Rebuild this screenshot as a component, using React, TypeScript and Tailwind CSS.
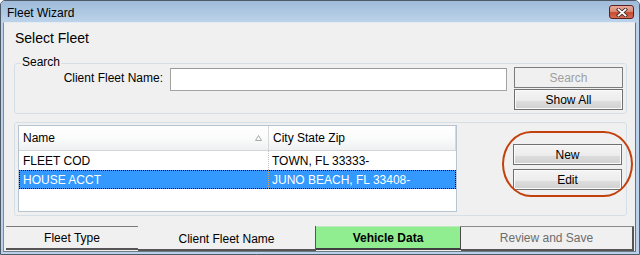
import React from "react";

function Btn({ children, disabled }: { children: React.ReactNode; disabled?: boolean }) {
  return disabled ? (
    <div className="h-[21px] w-[109px] border border-[#7c7c7c] bg-[#f0f0f0] text-[#a0a0a0] flex items-center justify-center text-[12px] leading-[14px]">
      {children}
    </div>
  ) : (
    <div className="h-[21px] w-[109px] border border-[#707070] bg-[linear-gradient(#f4f4f4_0%,#ececec_55%,#dcdcdc_60%,#d0d0d0_100%)] shadow-[inset_0_0_0_1px_#fafafa] text-black flex items-center justify-center text-[12px] leading-[14px]">
      {children}
    </div>
  );
}

export default function App() {
  return (
    <div className="w-[640px] h-[255px] font-['Liberation_Sans',Arial,sans-serif] text-[12px] leading-[14px] text-black">
      <div className="w-[640px] h-[255px] flex flex-col bg-[#b9d1ea] border border-[#4d5a68] rounded-t-[5px] overflow-hidden">
        {/* Title bar */}
        <div className="h-[21px] flex items-start justify-between pl-[6px] pr-[5px] bg-[linear-gradient(#9fbbd9,#bcd3ea)]">
          <div className="mt-[5px] text-[12px] leading-[14px] text-black">Fleet Wizard</div>
          <div className="mt-[4px] h-[14px] w-[25px] rounded-[3px] border border-[#5b2121] bg-[linear-gradient(#e9ab9b_0%,#dc8a76_45%,#c64a31_55%,#d66c52_100%)] flex items-center justify-center">
            <svg width="12" height="9" viewBox="0 0 12 9">
              <path d="M2.5 1.5 L9.5 7.5 M9.5 1.5 L2.5 7.5" stroke="#3a2424" strokeWidth="3.4" strokeLinecap="square" />
              <path d="M2.5 1.5 L9.5 7.5 M9.5 1.5 L2.5 7.5" stroke="#ffffff" strokeWidth="1.8" strokeLinecap="square" />
            </svg>
          </div>
        </div>
        {/* Content */}
        <div className="ml-[2px] mr-[3px] mb-[2px] flex-1 flex flex-col bg-[#f0f0f0] border-l border-r border-b border-t border-l-[#7d8c9c] border-r-[#6f6f6f] border-b-[#6f7a86] border-t-[#e3ebf3]">
          <div className="pl-[11px] pt-[7px] text-[14px] leading-[16px]">Select Fleet</div>

          {/* Search group */}
          <div className="relative ml-[10px] mt-[17px] w-[613px] h-[51px] border border-[#d5dfe5] rounded-[3px]">
            <span className="absolute left-[6px] top-[-9px] px-[1px] bg-[#f0f0f0]">Search</span>
            <div className="flex items-start pt-[3px]">
              <div className="w-[148px] text-right mt-[4px]">Client Fleet Name:</div>
              <div className="ml-[7px] mt-[1px] w-[337px] h-[23px] bg-white border border-[#a3a3a3] border-t-[#9a9a9a]" />
              <div className="ml-[7px] flex flex-col gap-[1px]">
                <Btn disabled>Search</Btn>
                <Btn>Show All</Btn>
              </div>
            </div>
          </div>

          {/* List group */}
          <div className="relative ml-[10px] mt-[8px] w-[613px] h-[94px] border border-[#d5dfe5] rounded-[3px]">
            <div className="flex items-start pl-[3px] pt-[2px]">
              <div className="w-[439px] h-[87px] bg-white border border-[#b7c4d1] flex flex-col">
                <div className="h-[25px] flex bg-[linear-gradient(#ffffff_0%,#fbfbfb_50%,#eef0f2_100%)] border-b border-[#d5d5d5]">
                  <div className="w-[250px] flex items-center justify-between pl-[4px] pr-[6px] border-r border-[#d8d8d8]">
                    <span>Name</span>
                    <svg width="7" height="6" viewBox="0 0 7 6">
                      <path d="M0.5 5.5 L3.5 0.5 L6.5 5.5 Z" fill="none" stroke="#a8a8a8" strokeWidth="1" />
                    </svg>
                  </div>
                  <div className="flex-1 flex items-center pl-[4px] border-r border-[#d8d8d8]">City State Zip</div>
                </div>
                <div className="h-[19px] flex">
                  <div className="w-[250px] flex items-center pl-[4px] border-r border-dotted border-[#bdbdbd]">FLEET COD</div>
                  <div className="flex-1 flex items-center pl-[3px]">TOWN, FL 33333-</div>
                </div>
                <div className="h-[19px] flex bg-[#3399ff] text-white outline-1 outline-dotted outline-offset-[-1px] outline-black">
                  <div className="w-[250px] flex items-center pl-[4px] border-r border-dotted border-[#d9a060]">HOUSE ACCT</div>
                  <div className="flex-1 flex items-center pl-[3px]">JUNO BEACH, FL 33408-</div>
                </div>
              </div>
              <div className="ml-[56px] mt-[19px] flex flex-col gap-[4px]">
                <Btn>New</Btn>
                <Btn>Edit</Btn>
              </div>
            </div>
            <div className="absolute left-[487px] top-[8px] w-[131px] h-[66px] border-2 border-[#c2410c] rounded-[30px/34px]" />
          </div>

          {/* Tabs */}
          <div className="mt-[10px] pl-[2px] flex items-start">
            <div className="w-[132px] h-[24px] bg-[#f0f0f0] border-t border-t-[#7a7a7a] border-b-2 border-b-[#555555] flex items-center justify-center">
              Fleet Type
            </div>
            <div className="w-[178px] h-[25px] bg-[#f0f0f0] border-r border-b-2 border-[#555555] flex items-center justify-center pt-[3px]">
              Client Fleet Name
            </div>
            <div className="w-[145px] h-[24px] bg-[#90ee90] border-t border-t-[#bfe9bf] border-r border-b-2 border-r-[#4a4a4a] border-b-[#3f3f3f] flex items-center justify-center font-bold">
              Vehicle Data
            </div>
            <div className="w-[173px] h-[25px] bg-[#f0f0f0] border-t border-r-2 border-b-2 border-t-[#8a8a8a] border-r-[#555555] border-b-[#555555] flex items-center justify-center text-[#6d6d6d]">
              Review and Save
            </div>
          </div>
        </div>
      </div>
    </div>
  );
}
